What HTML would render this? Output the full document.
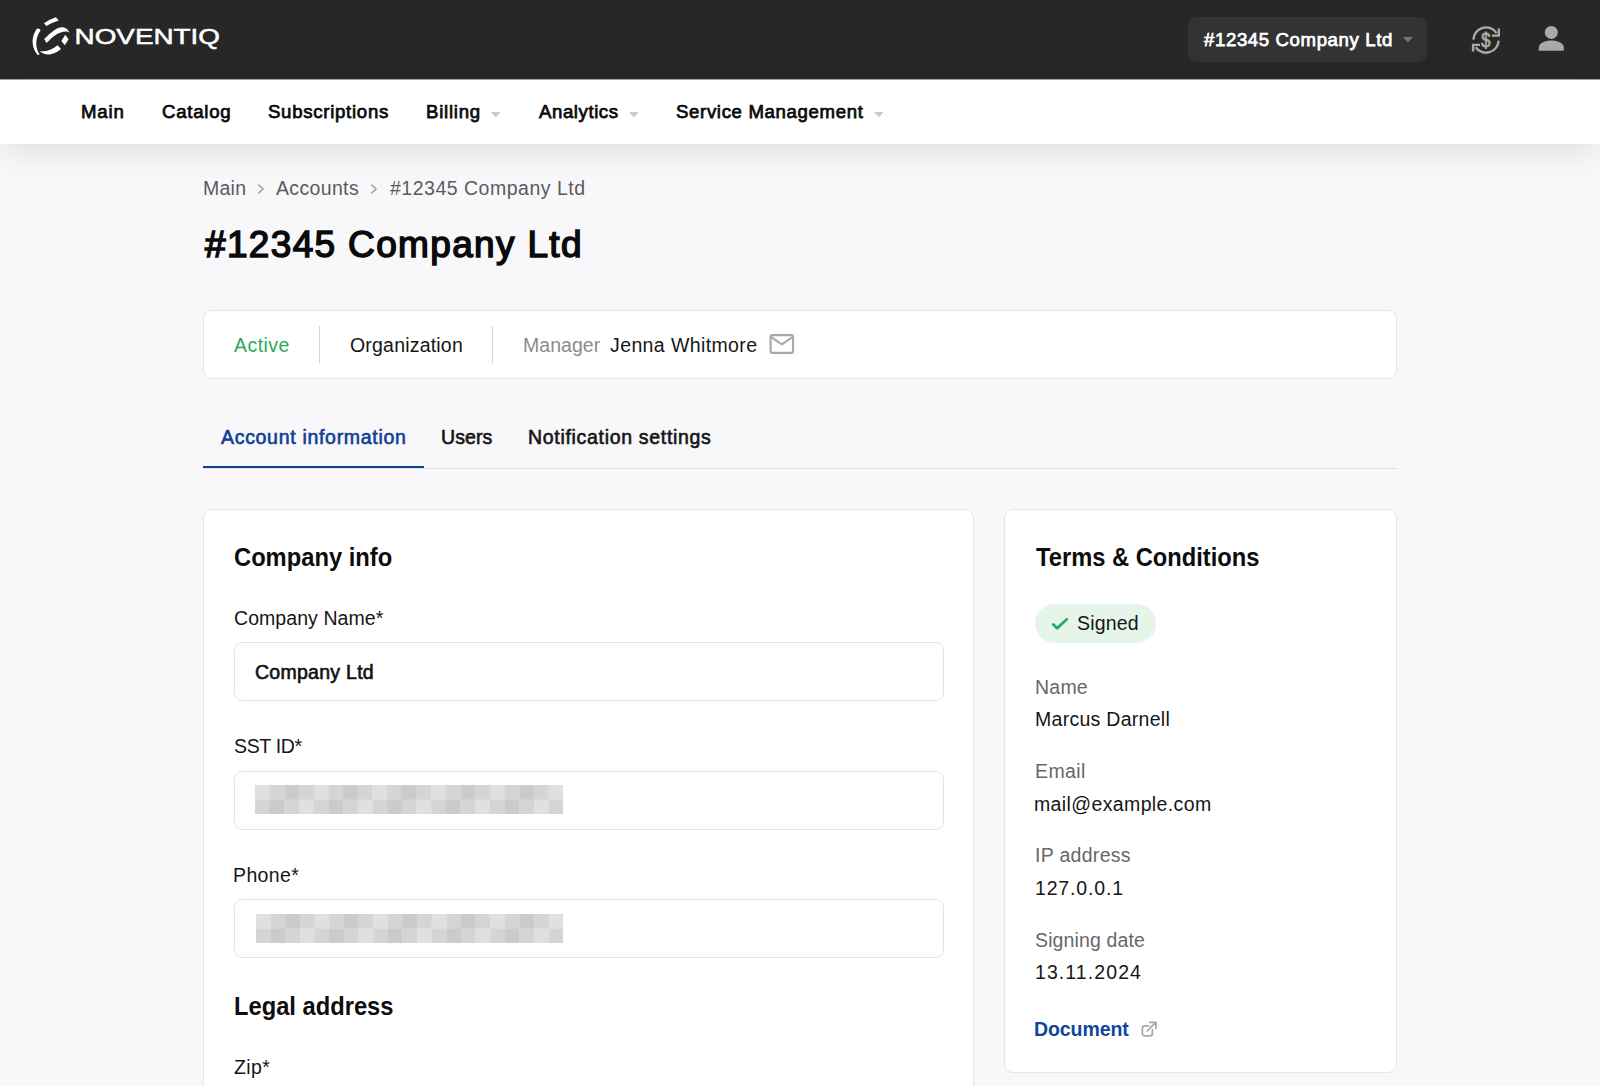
<!DOCTYPE html>
<html lang="en">
<head>
<meta charset="utf-8">
<title>#12345 Company Ltd</title>
<style>
*{box-sizing:border-box;margin:0;padding:0}
html,body{width:1600px;height:1086px;overflow:hidden}
body{background:#f8f8fa;font-family:"Liberation Sans",sans-serif;color:#111;position:relative}
.abs{position:absolute}
.x{position:absolute;white-space:nowrap;line-height:1}
#hdr{position:absolute;left:0;top:0;width:1600px;height:79px;background:#272727}
#acct{position:absolute;left:1188px;top:17.3px;width:239px;height:44.4px;background:#333;border-radius:8.5px}
#nav{position:absolute;left:0;top:79px;width:1600px;height:65px;border-top:1px solid #a2a2a2;background:#fff;box-shadow:0 5px 34px rgba(0,0,0,.115)}
.card{position:absolute;background:#fff;border:1px solid #e6e6e7;border-radius:9px}
.vsep{position:absolute;width:1px;background:#d3d3d3}
.inp{position:absolute;left:233.9px;width:710.2px;height:59px;background:#fff;border:1px solid #e3e3e5;border-radius:8.5px}
.px{position:absolute;width:308.3px;height:29.2px}
</style>
</head>
<body>
<div id="hdr">
  <svg class="abs" style="left:26px;top:10px" width="200" height="52" viewBox="26 10 200 52">
    <g fill="#fff">
      <path d="M36.6 28.9 C32.6 35 29.6 44.5 37.6 54.9 L39.6 54.4 C34.3 46 36 37 40.5 30.4 Q39.4 27.8 36.6 28.9 Z"/>
      <path d="M44 23.2 Q49.5 19.3 55.9 17.2 L58.8 20.5 Q52 22.5 46.4 26 Z"/>
      <path d="M44.2 39 C48 35 52 31.5 55.7 29.2 C60 26.8 66 25.5 69.8 33 C67 30.5 62 31.5 57.1 33.9 C53 36 49.5 40 46.6 43 Z"/>
      <path d="M65.3 34.7 L68.6 39.2 L64.8 45.2 L61.4 41.1 Z"/>
      <path d="M39.9 51.2 C46 52 52.5 49.5 57.6 45.2 L61 49 C56 53.5 47 57.5 40 51.6 Z"/>
    </g>
    <text x="74.6" y="44.2" font-family="Liberation Sans, sans-serif" font-size="21.4" font-weight="400" fill="#fff" stroke="#fff" stroke-width="0.5" textLength="145.4" lengthAdjust="spacingAndGlyphs">NOVENTIQ</text>
  </svg>
  <div id="acct"></div>
  <div class="x" style="left:1204px;top:31px;font-size:18.6px;font-weight:400;-webkit-text-stroke:0.75px currentColor;color:#ffffff;letter-spacing:0.619px">#12345 Company Ltd</div>
  <svg class="abs" style="left:1401.6px;top:35.9px" width="11.8" height="7.6" viewBox="0 0 11.8 7.6"><path d="M1 1 H10.8 L5.90 6.6 Z" fill="#787878"/></svg>
  <svg class="abs" style="left:1466px;top:20px" width="40" height="40" viewBox="1466 20 40 40" fill="none" stroke="#a9aaa8" stroke-width="2.4">
    <path d="M1473.4 39.6 A12.6 12.6 0 0 1 1496.6 33.2"/>
    <path d="M1498.6 40.6 A12.6 12.6 0 0 1 1475.6 47.2"/>
    <path d="M1491.9 35.6 H1498.8 V28.6"/>
    <path d="M1480 44.9 H1473.1 V51.6"/>
    <text transform="translate(1485.9 46.9) scale(0.84 1)" text-anchor="middle" style="font-family:'Liberation Sans',sans-serif;font-size:19.6px;font-weight:400" fill="#a9aaa8" stroke="#a9aaa8" stroke-width="0.85">$</text>
  </svg>
  <svg class="abs" style="left:1536px;top:24px" width="30" height="30" viewBox="0 0 30 30" fill="#a9aaa8">
    <circle cx="15.3" cy="8.4" r="6.5"/>
    <path d="M2.8 26.8 V23.6 C2.8 18.8 9.6 16.6 15.3 16.6 C21 16.6 27.8 18.8 27.8 23.6 V26.8 Z"/>
  </svg>
</div>

<div id="nav"></div>
<div class="x" style="left:81px;top:103px;font-size:18.6px;font-weight:400;-webkit-text-stroke:0.75px currentColor;color:#0b0b0b;letter-spacing:0.858px">Main</div><div class="x" style="left:162px;top:103px;font-size:18.6px;font-weight:400;-webkit-text-stroke:0.75px currentColor;color:#0b0b0b;letter-spacing:0.769px">Catalog</div><div class="x" style="left:268px;top:103px;font-size:18.6px;font-weight:400;-webkit-text-stroke:0.75px currentColor;color:#0b0b0b;letter-spacing:0.719px">Subscriptions</div><div class="x" style="left:426px;top:103px;font-size:18.6px;font-weight:400;-webkit-text-stroke:0.75px currentColor;color:#0b0b0b;letter-spacing:0.765px">Billing</div><div class="x" style="left:539px;top:103px;font-size:18.6px;font-weight:400;-webkit-text-stroke:0.75px currentColor;color:#0b0b0b;letter-spacing:0.579px">Analytics</div><div class="x" style="left:676px;top:103px;font-size:18.6px;font-weight:400;-webkit-text-stroke:0.75px currentColor;color:#0b0b0b;letter-spacing:0.657px">Service Management</div>
<svg class="abs" style="left:489.5px;top:111.1px" width="11.6" height="7.4" viewBox="0 0 11.6 7.4"><path d="M1 1 H10.6 L5.80 6.4 Z" fill="#cbcbcb"/></svg>
<svg class="abs" style="left:627.6px;top:111.1px" width="11.6" height="7.4" viewBox="0 0 11.6 7.4"><path d="M1 1 H10.6 L5.80 6.4 Z" fill="#cbcbcb"/></svg>
<svg class="abs" style="left:872.9px;top:111.1px" width="11.6" height="7.4" viewBox="0 0 11.6 7.4"><path d="M1 1 H10.6 L5.80 6.4 Z" fill="#cbcbcb"/></svg>

<div class="x" style="left:203px;top:179px;font-size:19.5px;font-weight:400;color:#5b5b5e;letter-spacing:0.261px">Main</div><div class="x" style="left:276px;top:179px;font-size:19.5px;font-weight:400;color:#5b5b5e;letter-spacing:0.346px">Accounts</div><div class="x" style="left:390px;top:179px;font-size:19.5px;font-weight:400;color:#5b5b5e;letter-spacing:0.505px">#12345 Company Ltd</div>
<svg class="abs" style="left:255px;top:182px" width="12" height="14" viewBox="0 0 12 14" fill="none" stroke="#a3a3a3" stroke-width="1.5"><path d="M3.3 2.6 L8.1 7 L3.3 11.4"/></svg>
<svg class="abs" style="left:367.8px;top:182px" width="12" height="14" viewBox="0 0 12 14" fill="none" stroke="#a3a3a3" stroke-width="1.5"><path d="M3.3 2.6 L8.1 7 L3.3 11.4"/></svg>

<div class="x" style="left:205px;top:226px;font-size:37px;font-weight:400;-webkit-text-stroke:1.5px currentColor;color:#0a0a0a;letter-spacing:1.337px">#12345 Company Ltd</div>

<div class="card" style="left:202.9px;top:310px;width:1194.4px;height:69px"></div>
<div class="x" style="left:234px;top:336px;font-size:19.5px;font-weight:400;color:#2ba85c;letter-spacing:0.456px">Active</div><div class="x" style="left:350px;top:336px;font-size:19.5px;font-weight:400;color:#161616;letter-spacing:0.198px">Organization</div><div class="x" style="left:523px;top:336px;font-size:19.5px;font-weight:400;color:#8c8c8c;letter-spacing:0.047px">Manager</div><div class="x" style="left:610px;top:336px;font-size:19.5px;font-weight:400;color:#161616;letter-spacing:0.391px">Jenna Whitmore</div>
<div class="vsep" style="left:319px;top:326px;height:36.6px"></div>
<div class="vsep" style="left:492.2px;top:326px;height:36.6px"></div>
<svg class="abs" style="left:766px;top:330px" width="32" height="28" viewBox="766 330 32 28" fill="none" stroke="#a8aaaa" stroke-width="2.2" stroke-linejoin="round"><rect x="770.55" y="335.2" width="22.5" height="17.7" rx="1.9"/><path d="M771.1 337.1 L781.8 344.3 L792.5 337.1" stroke-width="2"/></svg>

<div class="x" style="left:221px;top:428px;font-size:19.5px;font-weight:400;-webkit-text-stroke:0.62px currentColor;color:#0f4194;letter-spacing:0.693px">Account information</div><div class="x" style="left:441px;top:428px;font-size:19.5px;font-weight:400;-webkit-text-stroke:0.62px currentColor;color:#161616;letter-spacing:0.088px">Users</div><div class="x" style="left:528px;top:428px;font-size:19.5px;font-weight:400;-webkit-text-stroke:0.62px currentColor;color:#161616;letter-spacing:0.688px">Notification settings</div>
<div class="abs" style="left:203px;top:467.6px;width:1194.2px;height:1px;background:#e1e1e4"></div>
<div class="abs" style="left:203px;top:465.6px;width:220.8px;height:2.6px;background:#10408f"></div>

<div class="card" style="left:202.9px;top:509px;width:771.6px;height:640px"></div>
<div class="x" style="left:234.00px;top:545px;font-size:25.5px;font-weight:700;color:#0d0d0d;transform:scaleX(0.9303);transform-origin:0 0">Company info</div><div class="x" style="left:234px;top:609px;font-size:19.5px;font-weight:400;color:#161616;letter-spacing:0.068px">Company Name*</div>
<div class="inp" style="top:641.9px"></div><div class="x" style="left:255px;top:663px;font-size:19.5px;font-weight:400;-webkit-text-stroke:0.62px currentColor;color:#111111;letter-spacing:0.271px">Company Ltd</div>
<div class="x" style="left:234px;top:737px;font-size:19.5px;font-weight:400;color:#161616;letter-spacing:-0.320px">SST ID*</div>
<div class="inp" style="top:771px"><svg class="px" style="left:20.1px;top:12.75px" viewBox="0 0 21 2" preserveAspectRatio="none"><rect x="0" y="0" width="1.02" height="1.02" fill="#e0e0e0"/><rect x="1" y="0" width="1.02" height="1.02" fill="#d5d5d5"/><rect x="2" y="0" width="1.02" height="1.02" fill="#cbcbcb"/><rect x="3" y="0" width="1.02" height="1.02" fill="#d5d5d5"/><rect x="4" y="0" width="1.02" height="1.02" fill="#e0e0e0"/><rect x="5" y="0" width="1.02" height="1.02" fill="#d5d5d5"/><rect x="6" y="0" width="1.02" height="1.02" fill="#cbcbcb"/><rect x="7" y="0" width="1.02" height="1.02" fill="#d5d5d5"/><rect x="8" y="0" width="1.02" height="1.02" fill="#e0e0e0"/><rect x="9" y="0" width="1.02" height="1.02" fill="#d5d5d5"/><rect x="10" y="0" width="1.02" height="1.02" fill="#cbcbcb"/><rect x="11" y="0" width="1.02" height="1.02" fill="#d5d5d5"/><rect x="12" y="0" width="1.02" height="1.02" fill="#e0e0e0"/><rect x="13" y="0" width="1.02" height="1.02" fill="#d5d5d5"/><rect x="14" y="0" width="1.02" height="1.02" fill="#cbcbcb"/><rect x="15" y="0" width="1.02" height="1.02" fill="#d5d5d5"/><rect x="16" y="0" width="1.02" height="1.02" fill="#e0e0e0"/><rect x="17" y="0" width="1.02" height="1.02" fill="#d5d5d5"/><rect x="18" y="0" width="1.02" height="1.02" fill="#cbcbcb"/><rect x="19" y="0" width="1.02" height="1.02" fill="#d5d5d5"/><rect x="20" y="0" width="1.02" height="1.02" fill="#e0e0e0"/><rect x="0" y="1" width="1.02" height="1" fill="#d5d5d5"/><rect x="1" y="1" width="1.02" height="1" fill="#cbcbcb"/><rect x="2" y="1" width="1.02" height="1" fill="#d5d5d5"/><rect x="3" y="1" width="1.02" height="1" fill="#e0e0e0"/><rect x="4" y="1" width="1.02" height="1" fill="#d5d5d5"/><rect x="5" y="1" width="1.02" height="1" fill="#cbcbcb"/><rect x="6" y="1" width="1.02" height="1" fill="#d5d5d5"/><rect x="7" y="1" width="1.02" height="1" fill="#e0e0e0"/><rect x="8" y="1" width="1.02" height="1" fill="#d5d5d5"/><rect x="9" y="1" width="1.02" height="1" fill="#cbcbcb"/><rect x="10" y="1" width="1.02" height="1" fill="#d5d5d5"/><rect x="11" y="1" width="1.02" height="1" fill="#e0e0e0"/><rect x="12" y="1" width="1.02" height="1" fill="#d5d5d5"/><rect x="13" y="1" width="1.02" height="1" fill="#cbcbcb"/><rect x="14" y="1" width="1.02" height="1" fill="#d5d5d5"/><rect x="15" y="1" width="1.02" height="1" fill="#e0e0e0"/><rect x="16" y="1" width="1.02" height="1" fill="#d5d5d5"/><rect x="17" y="1" width="1.02" height="1" fill="#cbcbcb"/><rect x="18" y="1" width="1.02" height="1" fill="#d5d5d5"/><rect x="19" y="1" width="1.02" height="1" fill="#e0e0e0"/><rect x="20" y="1" width="1.02" height="1" fill="#d5d5d5"/></svg></div>
<div class="x" style="left:233px;top:866px;font-size:19.5px;font-weight:400;color:#161616;letter-spacing:0.376px">Phone*</div>
<div class="inp" style="top:898.9px"><svg class="px" style="left:21.1px;top:14.1px;width:307.4px" viewBox="0 0 21 2" preserveAspectRatio="none"><rect x="0" y="0" width="1.02" height="1.02" fill="#e0e0e0"/><rect x="1" y="0" width="1.02" height="1.02" fill="#d5d5d5"/><rect x="2" y="0" width="1.02" height="1.02" fill="#cbcbcb"/><rect x="3" y="0" width="1.02" height="1.02" fill="#d5d5d5"/><rect x="4" y="0" width="1.02" height="1.02" fill="#e0e0e0"/><rect x="5" y="0" width="1.02" height="1.02" fill="#d5d5d5"/><rect x="6" y="0" width="1.02" height="1.02" fill="#cbcbcb"/><rect x="7" y="0" width="1.02" height="1.02" fill="#d5d5d5"/><rect x="8" y="0" width="1.02" height="1.02" fill="#e0e0e0"/><rect x="9" y="0" width="1.02" height="1.02" fill="#d5d5d5"/><rect x="10" y="0" width="1.02" height="1.02" fill="#cbcbcb"/><rect x="11" y="0" width="1.02" height="1.02" fill="#d5d5d5"/><rect x="12" y="0" width="1.02" height="1.02" fill="#e0e0e0"/><rect x="13" y="0" width="1.02" height="1.02" fill="#d5d5d5"/><rect x="14" y="0" width="1.02" height="1.02" fill="#cbcbcb"/><rect x="15" y="0" width="1.02" height="1.02" fill="#d5d5d5"/><rect x="16" y="0" width="1.02" height="1.02" fill="#e0e0e0"/><rect x="17" y="0" width="1.02" height="1.02" fill="#d5d5d5"/><rect x="18" y="0" width="1.02" height="1.02" fill="#cbcbcb"/><rect x="19" y="0" width="1.02" height="1.02" fill="#d5d5d5"/><rect x="20" y="0" width="1.02" height="1.02" fill="#e0e0e0"/><rect x="0" y="1" width="1.02" height="1" fill="#d5d5d5"/><rect x="1" y="1" width="1.02" height="1" fill="#cbcbcb"/><rect x="2" y="1" width="1.02" height="1" fill="#d5d5d5"/><rect x="3" y="1" width="1.02" height="1" fill="#e0e0e0"/><rect x="4" y="1" width="1.02" height="1" fill="#d5d5d5"/><rect x="5" y="1" width="1.02" height="1" fill="#cbcbcb"/><rect x="6" y="1" width="1.02" height="1" fill="#d5d5d5"/><rect x="7" y="1" width="1.02" height="1" fill="#e0e0e0"/><rect x="8" y="1" width="1.02" height="1" fill="#d5d5d5"/><rect x="9" y="1" width="1.02" height="1" fill="#cbcbcb"/><rect x="10" y="1" width="1.02" height="1" fill="#d5d5d5"/><rect x="11" y="1" width="1.02" height="1" fill="#e0e0e0"/><rect x="12" y="1" width="1.02" height="1" fill="#d5d5d5"/><rect x="13" y="1" width="1.02" height="1" fill="#cbcbcb"/><rect x="14" y="1" width="1.02" height="1" fill="#d5d5d5"/><rect x="15" y="1" width="1.02" height="1" fill="#e0e0e0"/><rect x="16" y="1" width="1.02" height="1" fill="#d5d5d5"/><rect x="17" y="1" width="1.02" height="1" fill="#cbcbcb"/><rect x="18" y="1" width="1.02" height="1" fill="#d5d5d5"/><rect x="19" y="1" width="1.02" height="1" fill="#e0e0e0"/><rect x="20" y="1" width="1.02" height="1" fill="#d5d5d5"/></svg></div>
<div class="x" style="left:233.51px;top:994px;font-size:25.5px;font-weight:700;color:#0d0d0d;transform:scaleX(0.9299);transform-origin:0 0">Legal address</div><div class="x" style="left:234px;top:1058px;font-size:19.5px;font-weight:400;color:#161616;letter-spacing:0.407px">Zip*</div>

<div class="card" style="left:1003.9px;top:509px;width:393.4px;height:564.4px"></div>
<div class="x" style="left:1035.98px;top:545px;font-size:25.5px;font-weight:700;color:#0d0d0d;transform:scaleX(0.9297);transform-origin:0 0">Terms &amp; Conditions</div>
<div class="abs" style="left:1035px;top:603.8px;width:120.6px;height:39.7px;border-radius:20px;background:#e5f5e9"></div>
<svg class="abs" style="left:1048px;top:612px" width="24" height="24" viewBox="1048 612 24 24" fill="none" stroke="#27ae60" stroke-width="2.8" stroke-linecap="round" stroke-linejoin="round"><path d="M1053.3 624.6 L1057.1 628.3 L1066.8 619.2"/></svg>
<div class="x" style="left:1077px;top:614px;font-size:19.5px;font-weight:400;color:#161616;letter-spacing:0.198px">Signed</div><div class="x" style="left:1035px;top:678px;font-size:19.5px;font-weight:400;color:#66676b;letter-spacing:0.226px">Name</div><div class="x" style="left:1035px;top:710px;font-size:19.5px;font-weight:400;color:#161616;letter-spacing:0.284px">Marcus Darnell</div><div class="x" style="left:1035px;top:762px;font-size:19.5px;font-weight:400;color:#66676b;letter-spacing:0.397px">Email</div><div class="x" style="left:1034px;top:795px;font-size:19.5px;font-weight:400;color:#161616;letter-spacing:0.379px">mail@example.com</div><div class="x" style="left:1035px;top:846px;font-size:19.5px;font-weight:400;color:#66676b;letter-spacing:0.303px">IP address</div><div class="x" style="left:1035px;top:879px;font-size:19.5px;font-weight:400;color:#161616;letter-spacing:0.841px">127.0.0.1</div><div class="x" style="left:1035px;top:931px;font-size:19.5px;font-weight:400;color:#66676b;letter-spacing:0.133px">Signing date</div><div class="x" style="left:1035px;top:963px;font-size:19.5px;font-weight:400;color:#161616;letter-spacing:1.088px">13.11.2024</div><div class="x" style="left:1034px;top:1020px;font-size:19.5px;font-weight:700;color:#0f469c;letter-spacing:-0.090px">Document</div>
<svg class="abs" style="left:1138px;top:1018px" width="24" height="24" viewBox="1138 1018 24 24" fill="none" stroke="#a8aaaa" stroke-width="1.75" stroke-linecap="round" stroke-linejoin="round"><path d="M1152.4 1029.6 V1033.5 A2.4 2.4 0 0 1 1150 1035.9 H1144.8 A2.4 2.4 0 0 1 1142.4 1033.5 V1028.2 A2.4 2.4 0 0 1 1144.8 1025.8 H1148.7"/><path d="M1147.2 1031 L1155.8 1022.4 M1149.6 1022.3 H1155.9 V1028.6" stroke-linejoin="miter"/></svg>
</body>
</html>
